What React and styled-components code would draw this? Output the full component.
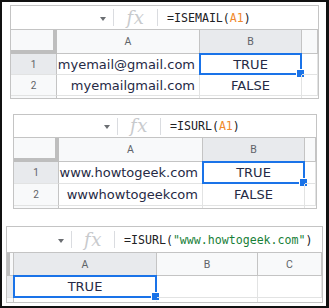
import React from 'react'
import styled, { createGlobalStyle } from 'styled-components'

const GlobalStyle = createGlobalStyle`
  * { box-sizing: border-box; }
  body {
    margin: 0;
    background: #fff;
    font-family: "DejaVu Sans", Verdana, sans-serif;
  }
`

const Frame = styled.div`
  width: 329px;
  height: 308px;
  border: 2px solid #111;
  border-right-width: 3px;
  padding-top: 3px;
  background: #fff;
  overflow: hidden;
`

const Sheet = styled.div`
  width: ${p => p.$width}px;
  margin-left: ${p => p.$left}px;
  margin-top: ${p => p.$top}px;
  border: 1px solid #c4c4c4;
  background: #fff;
`

const FormulaBar = styled.div`
  display: flex;
  align-items: center;
  height: ${p => p.$height}px;
  border-bottom: 1px solid #c4c4c4;
  box-sizing: content-box;
`

const NameBox = styled.div`
  width: ${p => p.$width}px;
  height: 100%;
  display: flex;
  align-items: center;
  justify-content: flex-end;
  padding-right: 7px;
`

const Caret = styled.span`
  width: 0;
  height: 0;
  border-left: 3.5px solid transparent;
  border-right: 3.5px solid transparent;
  border-top: 4px solid #6b6e72;
  margin-top: 2px;
`

const Divider = styled.span`
  width: 1px;
  height: 17px;
  background: #dadce0;
`

const FxBox = styled.div`
  width: ${p => p.$width}px;
  display: flex;
  justify-content: center;
  align-items: center;
  font-family: "DejaVu Serif", "Liberation Serif", serif;
  font-style: italic;
  font-size: 18px;
  line-height: 1;
  color: #c8cacd;
  letter-spacing: 0.5px;
`

const Formula = styled.div`
  padding-left: 9px;
  font-family: "DejaVu Sans Mono", "Liberation Mono", monospace;
  font-size: 11.6px;
  color: #202124;
  white-space: nowrap;
`

const Ref = styled.span`
  color: ${p => (p.$kind === 'string' ? '#188038' : '#f0892c')};
`

const Grid = styled.div`
  display: grid;
  grid-template-columns: ${p => p.$cols};
`

const Cell = styled.div`
  position: relative;
  height: ${p => p.$height}px;
  display: flex;
  align-items: center;
  justify-content: ${p => (p.$align === 'right' ? 'flex-end' : 'center')};
  padding: 0 4px;
  border-right: 1px solid #e2e3e3;
  border-bottom: 1px solid #e2e3e3;
  font-size: 13px;
  color: #262a45;
  white-space: nowrap;
  overflow: visible;
  &:last-child { border-right: none; }
`

const HeadCell = styled(Cell)`
  background: ${p => (p.$active ? '#e8eaed' : '#f8f9fa')};
  border-bottom-color: #c4c4c4;
  border-right-color: #c4c4c4;
  font-family: Roboto, "Liberation Sans", Arial, sans-serif;
  font-size: 10.5px;
  color: #5f6368;
  padding: 0;
`

const Corner = styled.div`
  height: ${p => p.$height}px;
  background: #f8f9fa;
  border-right: ${p => (p.$narrow ? '1px solid #c4c4c4' : '4px solid #bebebe')};
  border-left: ${p => (p.$narrow ? '3px solid #bebebe' : 'none')};
  border-bottom: ${p => (p.$narrow ? '1px solid #c4c4c4' : '4px solid #bebebe')};
`

const RowHead = styled(HeadCell)`
  border-bottom-color: #e2e3e3;
  font-size: 10px;
`

const Tail = styled.div`
  height: ${p => p.$height}px;
  background: ${p => (p.$head ? '#f8f9fa' : '#fff')};
  border-right: 1px solid ${p => (p.$head ? '#c4c4c4' : '#e2e3e3')};
  &:last-child { border-right: none; }
`

const Selection = styled.span`
  position: absolute;
  top: -1px;
  left: -1px;
  right: -1px;
  bottom: -1px;
  border: 2px solid #1a73e8;
  pointer-events: none;
  &::after {
    content: '';
    position: absolute;
    right: -5px;
    bottom: -5px;
    width: 7px;
    height: 7px;
    background: #1a73e8;
    border: 1px solid #fff;
  }
`

const sheets = [
  {
    left: 8, top: 0, width: 309,
    cols: [46, 143, 102, 16],
    nameBox: 102, fx: 44,
    formulaH: 23, headH: 23, rowH: 21, tail: 2,
    formula: [['=ISEMAIL('], ['A1', 'ref'], [')']],
    headers: ['A', 'B', ''],
    activeCol: 1,
    rows: [
      ['myemail@gmail.com', 'TRUE'],
      ['myemailgmail.com', 'FALSE'],
    ],
  },
  {
    left: 11, top: 15, width: 304,
    cols: [45, 144, 102, 11],
    nameBox: 103, fx: 43,
    formulaH: 22, headH: 23, rowH: 22, tail: 2,
    formula: [['=ISURL('], ['A1', 'ref'], [')']],
    headers: ['A', 'B', ''],
    activeCol: 1,
    rows: [
      ['www.howtogeek.com', 'TRUE'],
      ['wwwhowtogeekcom', 'FALSE'],
    ],
  },
  {
    left: 4, top: 17, width: 317,
    cols: [7, 143, 101, 64],
    nameBox: 64, fx: 43,
    formulaH: 25, headH: 22, rowH: 22, tail: 4,
    formula: [['=ISURL('], ['"www.howtogeek.com"', 'string'], [')']],
    headers: ['A', 'B', 'C'],
    activeCol: 0,
    narrow: true,
    rows: [['TRUE', '', '']],
  },
]

const SheetView = ({ s }) => {
  const cols = s.cols.map(c => `${c}px`).join(' ')
  return (
    <Sheet $left={s.left} $top={s.top} $width={s.width}>
      <FormulaBar $height={s.formulaH}>
        <NameBox $width={s.nameBox}><Caret /></NameBox>
        <Divider />
        <FxBox $width={s.fx - 1}>fx</FxBox>
        <Divider />
        <Formula>
          {s.formula.map(([text, kind], i) =>
            kind ? <Ref key={i} $kind={kind}>{text}</Ref> : <span key={i}>{text}</span>
          )}
        </Formula>
      </FormulaBar>
      <Grid $cols={cols}>
        <Corner $height={s.headH + 1} $narrow={s.narrow} />
        {s.headers.map((h, i) => (
          <HeadCell key={i} $height={s.headH + 1} $active={i === s.activeCol}>{h}</HeadCell>
        ))}
        {s.rows.map((row, r) => (
          <React.Fragment key={r}>
            <RowHead $height={s.rowH} $active={r === 0}>{s.narrow ? '' : r + 1}</RowHead>
            {s.headers.map((_, c) => {
              const value = row[c] || ''
              const isText = value && value !== 'TRUE' && value !== 'FALSE'
              return (
                <Cell key={c} $height={s.rowH} $align={isText ? 'right' : 'center'}>
                  {value}
                  {r === 0 && c === s.activeCol && <Selection />}
                </Cell>
              )
            })}
          </React.Fragment>
        ))}
        <Tail $height={s.tail} $head />
        {s.headers.map((_, c) => <Tail key={c} $height={s.tail} />)}
      </Grid>
    </Sheet>
  )
}

export default function App() {
  return (
    <>
      <GlobalStyle />
      <Frame>
        {sheets.map((s, i) => <SheetView key={i} s={s} />)}
      </Frame>
    </>
  )
}
